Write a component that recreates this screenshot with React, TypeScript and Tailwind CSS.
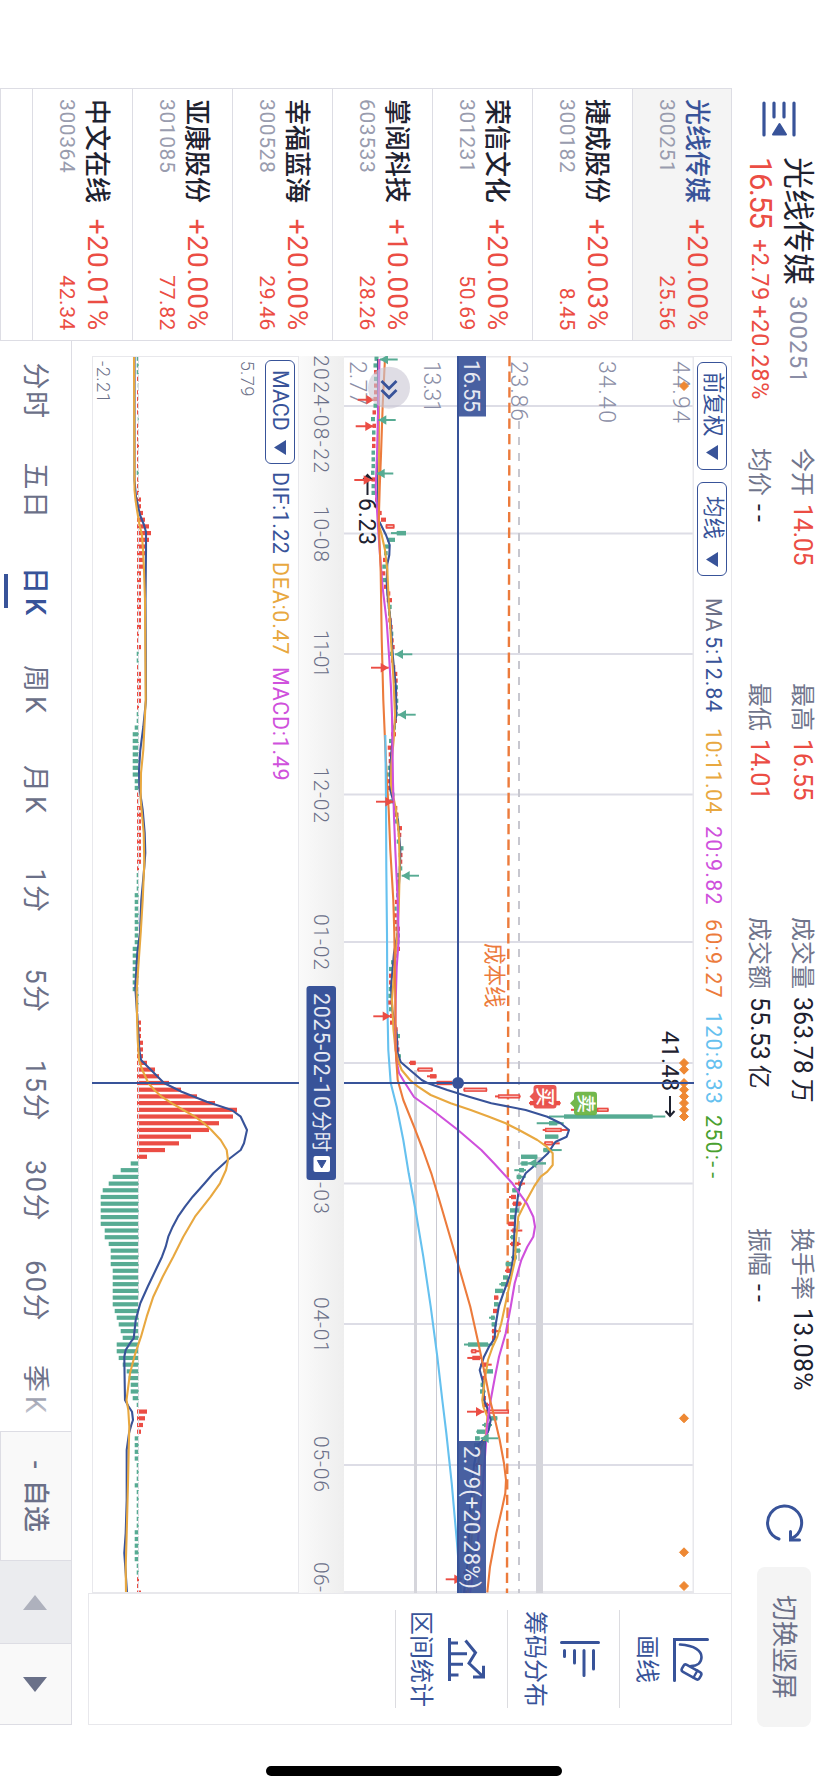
import React from 'react';

type Point = [number, number];

interface Stock {
  name: string;
  code: string;
  change: string;
  price: string;
}

const STOCKS: Stock[] = [
  { name: '光线传媒', code: '300251', change: '+20.00%', price: '25.56' },
  { name: '捷成股份', code: '300182', change: '+20.03%', price: '8.45' },
  { name: '荣信文化', code: '301231', change: '+20.00%', price: '50.69' },
  { name: '掌阅科技', code: '603533', change: '+10.00%', price: '28.26' },
  { name: '幸福蓝海', code: '300528', change: '+20.00%', price: '29.46' },
  { name: '亚康股份', code: '301085', change: '+20.00%', price: '77.82' },
  { name: '中文在线', code: '300364', change: '+20.01%', price: '42.34' },
];

const TABS = ['分时', '五日', '日K', '周K', '月K', '1分', '5分', '15分', '30分', '60分', '季K'];

const RED = '#eb4d44';
const GREEN = '#57ab93';
const BLUE = '#385399';
const YELLOW = '#e8a840';
const MAGENTA = '#cf51dc';
const ORANGE = '#ec7b3c';
const SKY = '#66c1ef';

// Levels are measured upwards from the bottom of the screen
const FLOOR = 828;
const CURSOR_X = 1083;
const STEP = 6.706;
const barX = (k: number) => CURSOR_X + k * STEP;
const levelY = (level: number) => FLOOR - level;

const toPath = (values: number[]) => {
  let d = '';
  for (let i = 0; i < values.length; i += 2) {
    d += `${i === 0 ? 'M' : 'L'}${values[i]} ${levelY(values[i + 1])}`;
  }
  return d;
};

const GRID_X = [406, 533.5, 654, 794.5, 942, 1063, 1183.5, 1324, 1465];

const MA5 = [
  359, 378, 500, 378, 521, 379, 535, 386, 545, 389.7, 555, 389.3, 564, 387.3, 582, 386.7, 595, 387.5, 622, 390.7,
  655, 392.7, 688, 396, 715, 396.3, 733, 393.3, 753, 391.3, 770, 390.3, 790, 390.3, 800, 393, 820, 398, 850, 400.3,
  867, 400, 900, 398, 933, 397.7, 953, 394, 987, 391, 1010, 392.3, 1033, 396.7, 1053, 397.7, 1062, 400.7, 1070, 410,
  1080, 421.7, 1083, 427.3, 1090, 447.3, 1096.7, 469, 1103.3, 491.3, 1110, 525.7, 1116.7, 547.3, 1123.3, 560.7,
  1130, 569, 1136.7, 566.7, 1141.7, 555.7, 1145, 553.3, 1153.3, 548, 1163.3, 537.3, 1173.3, 525.7, 1183.3, 520.7,
  1193.3, 518.3, 1216.7, 515.3, 1240, 514, 1256.7, 513.3, 1273.3, 510.7, 1293.3, 503.3, 1306.7, 498.7, 1326.7, 495.3,
  1338.3, 494.7, 1346.7, 489, 1356.7, 484, 1370, 479.7, 1383.3, 483.3, 1400, 484, 1410, 488, 1420, 490.7,
  1430, 488.7, 1438.3, 484.7, 1445, 478, 1465, 474, 1510, 470, 1560, 468, 1593, 464,
];

const MA10 = [
  359, 379, 525, 379, 535, 381.7, 550, 385, 570, 387.3, 600, 388.7, 640, 391, 680, 393.5, 715, 395, 740, 393.7,
  765, 391.3, 785, 391, 810, 396, 835, 399, 870, 399.7, 910, 398.7, 940, 397, 970, 394.3, 1000, 392, 1030, 393.5,
  1050, 395.5, 1062, 398.5, 1070, 401.7, 1080, 410, 1086.7, 418, 1095, 430.7, 1103.3, 450.7, 1110, 470.7,
  1116.7, 489, 1123.3, 505.7, 1130, 519, 1140, 537.3, 1146.7, 546.7, 1153.3, 552.7, 1165, 552.7, 1171.7, 547.3,
  1176.7, 540.7, 1186.7, 534, 1200, 526.7, 1216.7, 518.3, 1240, 516, 1260, 515, 1276.7, 511.3, 1293.3, 507.7,
  1323.3, 501.3, 1336.7, 497.3, 1346.7, 492.7, 1360, 488, 1380, 484.7, 1400, 482.3, 1406.7, 483.3, 1416.7, 487.3,
  1426.7, 486.7, 1436.7, 485.7, 1450, 480, 1500, 474, 1593, 468,
];

const MA20 = [
  359, 379.5, 455, 377, 488, 375.7, 521.7, 377.7, 555, 380, 588, 382.7, 622, 386.7, 655, 389, 688, 391, 715, 392,
  783, 393, 817, 394, 850, 395.3, 900, 397.7, 940, 398.7, 967, 396.7, 1000, 395.7, 1033, 395.3, 1060, 396.3,
  1073, 399, 1083, 405, 1097, 414, 1110, 432.3, 1130, 458, 1150, 481.3, 1163.3, 494, 1183.3, 512.3, 1203.3, 526.7,
  1216.7, 533.3, 1226.7, 535, 1236.7, 533.3, 1246.7, 527.3, 1260, 521.3, 1283.3, 514.7, 1306.7, 510.7, 1333.3, 505.7,
  1356.7, 499, 1376.7, 495, 1400, 490.7, 1410, 489, 1430, 486.7, 1443, 486, 1483, 483, 1540, 478, 1593, 470,
];

const MA60 = [
  358, 385, 405, 382.7, 455, 381, 488, 379.7, 521, 378.7, 572, 380.7, 638, 381.7, 700, 383.3, 740, 385, 777, 386.7,
  810, 388.7, 850, 390.3, 900, 393.3, 933, 394.3, 1000, 395.3, 1050, 395.7, 1060, 396.3, 1080, 397.7, 1100, 403.3,
  1126.7, 414, 1150, 423, 1173.3, 431.3, 1206.7, 441.3, 1240, 451, 1273.3, 460.7, 1306.7, 470.3, 1340, 477.7,
  1373.3, 484.7, 1400, 490, 1416.7, 494.3, 1440, 499.7, 1463.3, 504, 1480, 506, 1493.3, 505.3, 1510, 501.7,
  1533.3, 496.3, 1566.7, 490, 1592.3, 487.3,
];

const MA120 = [
  735, 385.3, 800, 386, 867, 386.3, 933, 387, 1000, 387.3, 1050, 388.3, 1083, 390.7, 1106.7, 396.7, 1140, 403.3,
  1173.3, 408.7, 1210, 415.5, 1256.7, 423.3, 1306.7, 430.7, 1356.7, 437.3, 1400, 442.3, 1433, 446.3, 1483, 451.7,
  1543, 457, 1593, 461,
];

const DIF = [
  357, 134.5, 480, 134.5, 497, 136, 506, 138, 515, 140, 525, 144, 532, 146, 550, 146, 600, 145.5, 700, 146,
  727, 143.3, 750, 140.3, 770, 139, 787, 139.3, 810, 142.7, 833, 144.7, 853, 145.3, 867, 144.3, 900, 141.3, 933, 140,
  953, 137.3, 987, 135.3, 1013, 137, 1037, 138.7, 1050, 139.3, 1060, 141, 1073, 154, 1083, 164, 1091.7, 181.7,
  1101.7, 206.7, 1110, 231.7, 1116.7, 240.7, 1130, 247, 1143.3, 244, 1150, 240.7, 1160, 227.7, 1173.3, 213.3,
  1183.3, 204.7, 1196.7, 192.7, 1206.7, 185, 1216.7, 178, 1226.7, 172.7, 1236.7, 168.3, 1246.7, 165.7, 1256.7, 162,
  1270, 155.7, 1286.7, 147.7, 1303.3, 140.3, 1320, 135.7, 1338.3, 133.7, 1341.7, 131, 1350, 125.7, 1356.7, 124.3,
  1383, 124.7, 1400, 125, 1406, 128.3, 1411.7, 132, 1420, 133, 1425, 131.3, 1433.3, 129, 1450, 126.7, 1500, 126.7,
  1533, 125.7, 1553, 124.3, 1573, 125.7, 1593, 127,
];

const DEA = [
  357, 134, 490, 134.5, 500, 135.5, 510, 137, 525, 139.5, 535, 142, 550, 143, 570, 144, 600, 145, 700, 145.7,
  750, 143.3, 773, 141, 800, 140.7, 833, 143.7, 863, 144.3, 900, 142.7, 933, 140.7, 967, 138.3, 990, 136.7, 1017, 137,
  1040, 137.7, 1060, 139, 1070, 142.3, 1083, 148.3, 1090, 154.3, 1096.7, 161.7, 1103.3, 172, 1110, 183.3, 1116.7, 195,
  1123.3, 204, 1130, 211.3, 1140, 220.7, 1150, 226.7, 1160, 228, 1170, 226, 1183.3, 220, 1196.7, 210.7, 1216.7, 195,
  1236.7, 183.3, 1256.7, 173.3, 1276.7, 162.7, 1296.7, 153.3, 1316.7, 146.7, 1336.7, 141, 1353.3, 135.3, 1373.3, 130,
  1400, 126.5, 1410, 128.3, 1426.7, 129.3, 1450, 128.7, 1483, 128, 1533, 126.7, 1567, 125.7, 1593, 126,
];

// Histogram from bar -108 to bar 76, cursor sits on bar 0
const HISTOGRAM = [
  -2, -2, -2, 2, -1, 1, 1, 1, 1, -1, 1, 2, 1, 2, 1, 2, 1, -2, 2, 2, 2,
  4, 4, 6, 8, 12, 14, 12, 10, 8, 6, 6, 4, 4, 4, 4, 4, 4, 4, 4, 4, 2, 2, 4, -2, -2, 2, 4, 4, 4, 4, 4, 2, -2, -2, -4,
  -6, -6, -6, -6, -6, -6, -6, -4, -4, 2, 2, 4, 4, 4, 4, 4, 4, 4, 4, 4, 2, -2, -2, -2, -4, -4, -4, -4, -4, -4, -4, -4,
  -6, -6, -6, -6, -6, -6, -6, -2, -2, -2, 2, 4, 4, 4, 6, 6, 6, 10, 18, 22, 32, 44, 60, 78, 100, 96, 82, 72, 54, 42,
  28, 10, -8, -18, -26, -30, -36, -38, -38, -38, -38, -38, -34, -34, -30, -28, -28, -28, -26, -26, -26, -26, -26, -26,
  -24, -22, -20, -18, -16, -22, -22, -20, -16, -12, -10, -8, -8, -6, -2, 10, 8, 6, 4, -4, -4, -4, -4, -2, -2, -2, -4,
  -2, -2, -2, -2, -2, -2, -4, -4, -4, -4, -4, -2, -2, 2, 2, 4,
];

// Early candles are tiny: direction plus body bottom / top, one per bar from -108
const SMALL: [string, number, number][] = [
  ['g', 374.5, 378.5], ['g', 373.5, 378], ['r', 374, 377.5], ['g', 374, 377.5], ['r', 374, 377], ['r', 374, 377],
  ['r', 373.5, 377], ['g', 373.5, 377], ['r', 372.5, 376], ['g', 371, 375], ['r', 372.5, 376], ['g', 372, 375.5],
  ['r', 372, 375.5], ['r', 372, 375.5], ['g', 371.5, 375], ['g', 371.5, 375], ['g', 371.5, 375], ['g', 371, 374.5],
  ['r', 371.5, 375], ['g', 371.5, 375], ['g', 371.5, 375], ['r', 375, 378.5], ['r', 375, 379], ['r', 378, 381.7],
  ['r', 381, 386], ['r', 385.7, 394.3], ['g', 396.7, 406], ['g', 387.3, 395], ['g', 385, 389], ['g', 384, 387.7],
  ['r', 383, 386.7], ['g', 382.3, 386], ['r', 381.7, 385.3], ['g', 382.3, 386], ['r', 384, 388], ['r', 386.7, 390.3],
  ['r', 386.7, 392], ['g', 387.7, 391.7], ['g', 388, 391], ['r', 388.3, 391.7], ['r', 389.3, 392.7], ['g', 390, 393.3],
  ['r', 390, 393.7], ['r', 391, 394.7], ['g', 390, 393.3], ['r', 391, 394], ['r', 392.3, 395.3], ['r', 393.3, 397.3],
  ['r', 393.3, 397.7], ['g', 394, 398], ['r', 394.5, 397.5], ['g', 395, 398.3], ['g', 395, 398], ['g', 395, 397.7],
  ['r', 394, 397], ['g', 393, 396], ['r', 391, 396], ['g', 389, 392.3], ['r', 387.7, 392], ['r', 388.7, 392],
  ['r', 388.7, 392], ['g', 387.7, 391], ['g', 386, 390], ['r', 386, 390], ['r', 386.7, 390], ['g', 392.5, 394.5],
  ['g', 390, 393], ['r', 393.3, 397.3], ['r', 393.3, 398.5], ['g', 394, 398], ['r', 397, 402], ['r', 397.7, 401.3],
  ['g', 396.7, 399.3], ['g', 399, 403.5], ['r', 398.7, 402.5], ['r', 399.3, 402.3], ['g', 398.7, 402.3], ['g', 396.7, 400],
  ['r', 396, 399.5], ['r', 396, 399.3], ['g', 396, 399], ['r', 395, 398], ['g', 394.3, 396.7], ['r', 393.3, 396.7],
  ['r', 393.3, 396.7], ['r', 395.3, 400], ['g', 396, 400], ['g', 395.5, 399.5], ['r', 395, 400], ['g', 393.3, 397.7],
  ['g', 391, 395], ['g', 389, 393.3], ['r', 389, 393.3], ['r', 389, 392], ['g', 388.7, 391.7], ['g', 388.3, 392.3],
  ['r', 387.7, 391], ['g', 389, 391.5], ['r', 390, 392], ['r', 390, 394], ['r', 393.3, 397.7], ['g', 395, 400],
  ['r', 395.5, 398.5], ['r', 396, 399.5], ['g', 396.7, 400], ['r', 396.5, 399.5],
];

// bar, colour, low, body bottom, body top, high
const CANDLES: [number, string, number, number, number, number][] = [
  [-83, 'h', 385.7, 386, 394.3, 394.3], [-82, 'g', 391, 397, 406, 406],
  [-4, 'g', 397, 397, 400.7, 401], [-3, 'r', 409, 410, 415.7, 415.7], [-2, 'h', 417, 417.7, 432.5, 433],
  [-1, 'r', 427, 430, 436.5, 436.5], [0, 'r', 436, 436.5, 452, 452], [1, 'h', 463.3, 463.8, 487, 487.3],
  [2, 'h', 495, 498, 520, 520.7], [3, 'r', 529, 530, 560, 560.7], [4, 'h', 571, 597, 608.5, 608.7],
  [5, 'g', 549, 564, 652.7, 665.3], [6, 'g', 536.7, 549, 557.3, 563.7], [7, 'h', 542.7, 545, 561.7, 569],
  [8, 'g', 545, 545, 558.3, 558.3], [9, 'h', 544, 544.5, 553, 559.7], [10, 'g', 543.3, 543.3, 550.7, 561.7],
  [11, 'g', 521, 521, 537.3, 537.3], [12, 'g', 520.3, 521.3, 527.7, 546], [13, 'g', 514.3, 519, 524, 526],
  [14, 'g', 516.7, 516.7, 521.3, 525.7], [15, 'r', 515, 518, 522.3, 525], [16, 'g', 512.3, 512.3, 518.7, 518.7],
  [17, 'r', 509, 511, 516, 516], [18, 'r', 512.3, 513, 520.7, 521.7], [19, 'g', 510, 510, 518.7, 518.7],
  [20, 'g', 510, 510, 515, 515], [21, 'r', 507.7, 508.3, 514.3, 515], [22, 'r', 510.7, 512.3, 515.7, 522.3],
  [23, 'g', 510, 511, 515, 515], [24, 'r', 510, 511, 518.7, 520.7], [25, 'g', 514, 516, 520, 520.7],
  [26, 'g', 511, 512.3, 516.7, 516.7], [27, 'g', 505.7, 505.7, 513, 513], [28, 'r', 505, 506.3, 510.7, 512.7],
  [29, 'g', 503, 503, 508, 508], [30, 'g', 499.3, 501, 506, 506], [31, 'g', 495, 495, 503.3, 503.3],
  [32, 'r', 494, 494, 498.3, 498.3], [33, 'g', 494, 494, 498.7, 498.7], [34, 'r', 493, 493, 497.3, 497.3],
  [35, 'g', 489, 491, 494.7, 495], [36, 'g', 491.7, 491.7, 496.7, 496.7], [37, 'r', 491.7, 492, 496.3, 500.7],
  [38, 'r', 492, 492, 495.7, 495.7], [39, 'g', 464, 468, 488, 494], [40, 'h', 470.7, 471.3, 476.3, 479.3],
  [41, 'r', 467.3, 472.3, 480, 481], [42, 'r', 480, 482.3, 487.3, 491.7], [43, 'g', 483, 484, 493, 493],
  [44, 'r', 482.3, 482.3, 486, 486], [45, 'g', 480.7, 480.7, 484.5, 484.5], [46, 'g', 480, 480, 485, 485.7],
  [47, 'r', 482.3, 482.3, 486, 486], [48, 'r', 482.3, 483, 488, 489], [49, 'h', 485.7, 486, 509, 509],
  [50, 'g', 490, 491, 497.3, 497.3], [51, 'g', 482.3, 484, 490.7, 492], [52, 'g', 476.3, 477, 487, 489],
  [53, 'g', 475, 475, 479.7, 479.7], [54, 'g', 474, 474, 480, 482], [55, 'r', 474, 474, 479, 481],
  [57, 'r', 473, 476, 480, 482], [59, 'g', 471, 472, 477, 478], [61, 'r', 470, 471, 476, 477],
  [64, 'g', 468, 470, 475, 476], [67, 'r', 467, 468, 473, 475], [70, 'g', 465, 467, 472, 473],
  [73, 'r', 463, 464, 469, 470], [76, 'r', 463, 463, 467, 468],
];

// x, tip level, tail level
const SELL_ARROWS: [number, number, number][] = [
  [359.5, 380, 397.7], [420, 378.3, 395.7], [473.5, 376.7, 393.3], [654.3, 395, 412.3],
  [714.7, 398, 415.7], [875.7, 401.7, 419], [1163.3, 528.3, 546], [1438.3, 480.7, 498.3],
];
const BUY_ARROWS: [number, number, number][] = [
  [399.7, 374.3, 357.7], [426.3, 373.3, 355.7], [480, 371.7, 354.3], [667.7, 388.7, 371],
  [801.7, 393.3, 376], [1016.3, 390.7, 373.3], [1411.7, 484, 467], [1579.3, 462.3, 445.7],
];

const DIAMONDS = [386, 1063, 1069.7, 1083, 1089.7, 1096.4, 1103.1, 1109.8, 1116.5, 1418.3, 1552.3, 1586];

const Candle: React.FC<{ data: [number, string, number, number, number, number] }> = ({ data }) => {
  const [k, kind, low, bottom, top, high] = data;
  const color = kind === 'g' ? GREEN : RED;
  const hollow = kind === 'h';
  const x = barX(k);
  return (
    <g>
      <rect x={x - 1} y={levelY(high)} width={2} height={high - low} fill={color} />
      <rect
        x={x - (hollow ? 1.4 : 2.2)}
        y={levelY(top) + (hollow ? 0.7 : 0)}
        width={hollow ? 2.8 : 4.4}
        height={top - bottom - (hollow ? 1.4 : 0)}
        fill={hollow ? '#f7b9b5' : color}
        stroke={hollow ? color : 'none'}
        strokeWidth={1.5}
      />
    </g>
  );
};

const TradeArrow: React.FC<{ at: [number, number, number]; color: string }> = ({ at, color }) => {
  const [x, tip, tail] = at;
  const dir = tail > tip ? 1 : -1;
  return (
    <g fill={color}>
      <path d={`M${x} ${levelY(tip)}V${levelY(tail)}`} stroke={color} strokeWidth={1.9} />
      <path d={`M${x} ${levelY(tip)}L${x - 4.8} ${levelY(tip + 8 * dir)}H${x + 4.8}Z`} />
    </g>
  );
};

const TradeFlag: React.FC<{ x: number; y: number; label: string; color: string }> = ({ x, y, label, color }) => (
  <g opacity={0.95}>
    <rect x={x} y={y} width={23.5} height={23} rx={3} fill={color} />
    <path d={`M${x + 7} ${y + 22.5}h9l-4.5 4.5z`} fill={color} />
    <text x={x + 11.7} y={y + 18.5} fontSize={19} fontWeight={500} fill="#fff" textAnchor="middle">
      {label}
    </text>
  </g>
);

const Caret = () => (
  <svg width="15" height="12" viewBox="0 0 15 12">
    <path d="M0 0h15L7.5 12z" fill={BLUE} />
  </svg>
);

const Stat: React.FC<{ label: string; value: string; unit?: string; className?: string }> = ({
  label,
  value,
  unit,
  className = 'text-[#1e2230]',
}) => (
  <div className="flex h-[43px] items-center gap-[8px] whitespace-nowrap text-[24px]">
    <span className="text-[#70758c]">{label}</span>
    <span className={`text-[25px] ${className} ${value === '--' ? 'tracking-[4px]' : ''}`}>
      {value}
      {unit && <span className="ml-[5px] text-[24px]">{unit}</span>}
    </span>
  </div>
);

const Header = () => (
  <header className="flex h-[96px] shrink-0 pl-[101px]">
    <svg className="mt-[31px]" width="36" height="36" viewBox="101 31 36 36">
      <path d="M103 34h32M103 64h32M103 44h14M103 54h14" stroke={BLUE} strokeWidth="3.2" strokeLinecap="round" />
      <path d="M124 48.500L134.500 42v13z" fill={BLUE} stroke={BLUE} strokeWidth="2" strokeLinejoin="round" />
    </svg>
    <div className="ml-5 flex w-[291px] flex-col whitespace-nowrap pt-[7px]">
      <div className="flex h-[46px] items-center">
        <span className="text-[32px] text-[#1e2230]">光线传媒</span>
        <span className="ml-[11px] text-[24px] tracking-[1.200px] text-[#8b8ea6]">300251</span>
      </div>
      <div className="flex h-[31px] items-center text-[#eb4d44]">
        <span className="w-[82px] text-[31px] tracking-[-1.500px]">16.55</span>
        <span className="w-[66px] text-[23.500px] tracking-[0.5px]">+2.79</span>
        <span className="text-[23.500px] tracking-[0.8px]">+20.28%</span>
      </div>
    </div>
    <div className="flex pt-[4px]">
      <div className="w-[235px]">
        <Stat label="今开" value="14.05" className="tracking-[-0.3px] text-[#eb4d44]" />
        <Stat label="均价" value="--" />
      </div>
      <div className="w-[234px]">
        <Stat label="最高" value="16.55" className="tracking-[-0.3px] text-[#eb4d44]" />
        <Stat label="最低" value="14.01" className="tracking-[-0.5px] text-[#eb4d44]" />
      </div>
      <div className="w-[311px]">
        <Stat label="成交量" value="363.78" unit="万" />
        <Stat label="成交额" value="55.53" unit="亿" />
      </div>
      <div className="w-[275px]">
        <Stat label="换手率" value="13.08%" className="tracking-[0.3px] text-[#1e2230]" />
        <Stat label="振幅" value="--" />
      </div>
    </div>
    <svg className="mt-[23px]" width="40" height="40" viewBox="1504 23 40 40">
      <path d="M1540 49A17 17 0 1 1 1539.500 36.500" fill="none" stroke={BLUE} strokeWidth="3" strokeLinecap="round" />
      <path d="M1532.500 37.500h8.500v-9" fill="none" stroke={BLUE} strokeWidth="3" strokeLinecap="round" />
    </svg>
    <button className="mt-[17px] ml-[24px] h-[54px] w-[160px] rounded-lg bg-[#f4f4f4] text-[26px] text-[#6b7088]">
      切换竖屏
    </button>
  </header>
);

const StockList = () => (
  <aside className="h-[732px] w-[253px] shrink-0 overflow-hidden border border-[#dddde4]">
    {STOCKS.map((stock, i) => (
      <div
        key={stock.code}
        className={`flex flex-col border-b border-[#dddde4] pr-[9px] pl-[10px] ${i === 0 ? 'h-[99px] bg-[#f4f4f4] pt-[17px]' : 'h-[100px] pt-[18px]'}`}
      >
        <div className="flex h-[34px] items-center justify-between">
          <span className={`text-[26px] font-medium ${i === 0 ? 'text-[#385399]' : 'text-[#1e2230]'}`}>{stock.name}</span>
          <span className="text-[28px] tracking-[0.8px] text-[#eb4d44]">{stock.change}</span>
        </div>
        <div className="flex h-[28px] items-center justify-between text-[21px]">
          <span className="tracking-[0.6px] text-[#999cae]">{stock.code}</span>
          <span className="tracking-[0.6px] text-[#eb4d44]">{stock.price}</span>
        </div>
      </div>
    ))}
  </aside>
);

const ChartToolbar = () => (
  <div className="flex h-[38px] items-center border-t border-l border-[#e8e8ec] pl-[5px] whitespace-nowrap text-[21.500px] tracking-[1.200px]">
    <button className="flex h-[30px] w-[108px] items-center justify-between rounded-md border border-[#385399] pr-[9px] pl-[9px] tracking-normal text-[#385399]">
      前复权
      <Caret />
    </button>
    <button className="ml-3 flex h-[30px] w-[94px] items-center justify-between rounded-md border border-[#385399] pr-[8px] pl-[13px] tracking-normal text-[#385399]">
      均线
      <Caret />
    </button>
    <span className="ml-[22px] w-[38px] tracking-[0.5px] text-[#6b7088]">MA</span>
    <span className="w-[92px] tracking-[0.8px] text-[#385399]">5:12.84</span>
    <span className="w-[98px] tracking-[0.3px] text-[#e8a840]">10:11.04</span>
    <span className="w-[93px] text-[#cf51dc]">20:9.82</span>
    <span className="w-[93px] text-[#ec7b3c]">60:9.27</span>
    <span className="w-[103px] tracking-[1.200px] text-[#66c1ef]">120:8.33</span>
    <span className="text-[#4aa12f]">
      250:<span className="tracking-[5px]">--</span>
    </span>
  </div>
);

const PriceChart = () => (
  <svg className="block shrink-0" width="1237" height="350" viewBox="356 134 1237 350">
    <g stroke="#dddde6" strokeWidth={2}>
      {GRID_X.map((x) => (
        <path key={x} d={`M${x} 134V484`} />
      ))}
    </g>
    <path d="M356 134.500H1592V484M356.500 134V484" fill="none" stroke="#e8e8ec" strokeWidth={2} />
    <rect x={1157} y={285} width={436} height={7} fill="#d5d5db" />
    <rect x={1070} y={411} width={523} height={3} fill="#d5d5db" />
    <path d="M1100 391.500H1593" stroke="#c9c9d2" strokeWidth={1} />

    <g fill="#8b8ea6" fontSize={23} fontWeight={300}>
      <text x={361} y={155.500} textLength={62}>44.94</text>
      <text x={361} y={229.500} textLength={62}>34.40</text>
      <text x={361} y={317} textLength={60}>23.86</text>
      <text x={361} y={404.500} textLength={52}>13.31</text>
      <text x={361} y={478} textLength={44}>2.77</text>
    </g>
    <path d="M421 309H1593" stroke="#c7c7cf" strokeWidth={2} strokeDasharray="8 8" />
    <path d="M356 318.500L1593 321" stroke={ORANGE} strokeWidth={2.4} strokeDasharray="10.300 5.300" />
    <text x={943} y={341.500} fontSize={21.5} fill={ORANGE}>成本线</text>

    {SMALL.map(([kind, bottom, top], i) => (
      <rect
        key={i}
        x={barX(i - 108) - 2.1}
        y={levelY(top)}
        width={4.2}
        height={top - bottom}
        fill={kind === 'g' ? GREEN : RED}
      />
    ))}
    {CANDLES.map((candle) => (
      <Candle key={candle[0]} data={candle} />
    ))}

    <g fill="none" strokeWidth={2.1} strokeLinejoin="round">
      <path d={toPath(MA5)} stroke={BLUE} />
      <path d={toPath(MA10)} stroke={YELLOW} />
      <path d={toPath(MA20)} stroke={MAGENTA} />
      <path d={toPath(MA60)} stroke={ORANGE} />
      <path d={toPath(MA120)} stroke={SKY} />
    </g>

    {/* Lowest and highest price marks */}
    <g fill="#1e2230" fontSize={23}>
      <text x={498} y={469} textLength={47}>6.23</text>
      <text x={1031} y={166} textLength={60}>41.48</text>
    </g>
    <g fill="none" stroke="#1e2230" strokeWidth={2}>
      <path d="M495 460.500H476M480 456l-5 4.500l5 4.500" />
      <path d="M1096 158H1115M1111 153.500l5 4.500l-5 4.500" />
    </g>

    {SELL_ARROWS.map((arrow) => (
      <TradeArrow key={arrow[0]} at={arrow} color={GREEN} />
    ))}
    {BUY_ARROWS.map((arrow) => (
      <TradeArrow key={arrow[0]} at={arrow} color={RED} />
    ))}

    {DIAMONDS.map((x) => (
      <path key={x} d={`M${x} 139.500l4.500 4.500l-4.500 4.500l-4.500 -4.500z`} fill="#ee8833" stroke="#ee8833" strokeLinejoin="round" />
    ))}
    <TradeFlag x={1085} y={271.5} label="买" color="#e9504a" />
    <TradeFlag x={1091.7} y={231} label="卖" color="#6cb544" />

    <circle cx={387.7} cy={439} r={21} fill="#c9c7d4" fillOpacity={0.6} />
    <path d="M381 431.500l7.500 7.500l-7.500 7.500M390 431.500l7.500 7.500l-7.500 7.500" fill="none" stroke={BLUE} strokeWidth={2.8} />

    <path d="M356 370H1593" stroke={BLUE} strokeWidth={2} />
    <rect x={356} y={342} width={60.5} height={27} fill={BLUE} fillOpacity={0.92} />
    <text x={360} y={364.500} fontSize={22} fill="#e6e9f2" textLength={52}>16.55</text>
    <rect x={1441} y={342} width={152} height={27} fill={BLUE} fillOpacity={0.92} />
    <text x={1446} y={364.500} fontSize={22} fill="#e6e9f2" textLength={143}>2.79(+20.28%)</text>
    <circle cx={CURSOR_X} cy={370} r={6} fill={BLUE} />
  </svg>
);

const DATES: Point[] = [[506, 1008], [630, 1101], [767, 1202], [914, 102], [1297, 401], [1436, 506]];

const DateAxis = () => (
  <svg className="relative z-10 block shrink-0" width="1237" height="45" viewBox="356 484 1237 45">
    <defs>
      <linearGradient id="axis" x1="0" y1="0" x2="0" y2="1">
        <stop offset="0" stopColor="#eeeeee" />
        <stop offset="1" stopColor="#fafafa" />
      </linearGradient>
    </defs>
    <rect x={356} y={484} width={1237} height={45} fill="url(#axis)" />
    <g fill="#6b7088" fontSize={21} fontWeight={300}>
      <text x={355} y={514} textLength={118}>2024-08-22</text>
      {DATES.map(([x, date]) => {
        const digits = String(date).padStart(4, '0');
        return (
          <text key={x} x={x} y={514} textLength={digits.startsWith('11') ? 48 : 56}>{`${digits.slice(0, 2)}-${digits.slice(2)}`}</text>
        );
      })}
      <text x={1156} y={514} textLength={58}>03-03</text>
      <text x={1562} y={514} textLength={30}>06-</text>
    </g>
    <rect x={986} y={492} width={194} height={29.500} rx={3} fill={BLUE} />
    <text x={993} y={514.500} fontSize={21.5} fill="#e6e9f2" textLength={115}>2025-02-10</text>
    <text x={1111} y={514.500} fontSize={20.5} fill="#e6e9f2">分时</text>
    <rect x={1156} y={498} width={16} height={16.500} rx={2} fill="#fff" />
    <path d="M1160.500 502l7.500 4.300l-7.500 4.300z" fill={BLUE} stroke={BLUE} strokeLinejoin="round" />
  </svg>
);

const MacdChart = () => (
  <div className="h-[207px] border border-[#e8e8ec]">
    <div className="flex h-[33px] items-center pt-[3px] pl-[3px] whitespace-nowrap text-[21.500px] tracking-[0.7px]">
      <button className="flex h-[30px] w-[104px] items-center justify-between rounded-md border border-[#385399] pr-[8px] pl-[9px] tracking-normal text-[#385399]">
        MACD
        <Caret />
      </button>
      <span className="ml-[8px] w-[90px] tracking-[0.4px] text-[#385399]">DIF:1.22</span>
      <span className="w-[105px] text-[#e8a840]">DEA:0.47</span>
      <span className="text-[#cf51dc]">MACD:1.49</span>
    </div>
    <svg className="block" width="1235" height="172" viewBox="357 563 1235 172">
      {HISTOGRAM.map((value, i) => (
        <rect
          key={i}
          x={barX(i - 108) - 2.1}
          y={value > 0 ? 691 - value : 689.3}
          width={4.2}
          height={Math.abs(value)}
          fill={value > 0 ? RED : GREEN}
        />
      ))}
      <path d="M357 689.500H1592" stroke="#dcdce2" strokeWidth={1} strokeDasharray="7 2" />
      <g fill="none" strokeWidth={2.1} strokeLinejoin="round">
        <path d={toPath(DIF)} stroke={BLUE} />
        <path d={toPath(DEA)} stroke={YELLOW} />
      </g>
      <g fill="#6b7088" fontSize={18.500} fontWeight={300}>
        <text x={360.500} y={587.500} textLength={36}>5.79</text>
        <text x={361} y={731.500} textLength={42}>-2.21</text>
      </g>
    </svg>
  </div>
);

const SidePanel = () => (
  <div className="flex h-[644px] w-[132px] shrink-0 flex-col items-center border border-[#e8e8ec] text-[24px] text-[#385399]">
    <div className="flex h-[112px] w-[98px] flex-col items-center border-b border-[#dcdce0] pt-[21px] leading-none">
      <svg width="46" height="38" viewBox="1637 118 46 38" fill="none" stroke={BLUE} strokeWidth="3" strokeLinecap="round">
        <path d="M1640.500 120.500V153.500H1681.500" />
        <path d="M1645.500 148C1646.500 133 1652 126.500 1658 126.500S1667 131 1667 137" strokeWidth="2.6" />
        <rect x="1663" y="132.500" width="20" height="8" rx="2.500" transform="rotate(-61 1673 136.500)" strokeWidth="2.6" />
        <path d="M1671.500 130.500l7 4" strokeWidth="2.400" />
      </svg>
      <span className="mt-[13px]">画线</span>
    </div>
    <div className="flex h-[112px] w-[98px] flex-col items-center border-b border-[#dcdce0] pt-[18px] leading-none">
      <svg width="38" height="42" viewBox="1642 227 38 42" fill="none" stroke={BLUE} strokeWidth="3" strokeLinecap="round">
        <path d="M1644.500 229.500V266.500M1652.500 234.500H1671M1652.500 244H1677.500M1652.500 253.500H1665M1652.500 263.500H1658.500" />
      </svg>
      <span className="mt-[12px]">筹码分布</span>
    </div>
    <div className="flex h-[112px] w-[98px] flex-col items-center border-b border-[#dcdce0] pt-[20px] leading-none">
      <svg width="46" height="40" viewBox="1636 340 46 40" fill="none" stroke={BLUE} strokeWidth="3">
        <path d="M1638 377.500H1681M1643 377V369M1653.700 377V360M1664.300 377V364M1675 377V368.500" />
        <path d="M1640.500 361.500L1652.700 351.500L1663.300 358L1676.500 344M1665.700 343.500H1677V354" />
      </svg>
      <span className="mt-[14px]">区间统计</span>
    </div>
  </div>
);

const PeriodTabs = () => (
  <nav className="flex h-[72px] shrink-0 border-t border-[#dddde4]">
    <div className="relative flex w-[1091px] overflow-hidden">
      {TABS.map((tab) => (
        <div
          key={tab}
          className={`relative flex w-[100px] shrink-0 items-center justify-center pt-[2px] text-[27px] ${
            tab.endsWith('K') ? 'tracking-[4px]' : 'tracking-[1.500px]'
          } ${tab === '日K' ? 'pl-[4px] font-medium text-[#385399]' : 'text-[#6b7088]'}`}
        >
          {tab}
          {tab === '日K' && <span className="absolute bottom-1 left-[33px] h-1 w-[34px] bg-[#385399]" />}
        </div>
      ))}
      <div className="absolute inset-y-0 right-0 w-[52px] bg-linear-to-r from-white/0 to-white/90" />
    </div>
    <div className="flex w-[130px] items-center justify-center gap-[11px] border-x border-b border-[#dddde4] bg-[#f9f9f9] text-[26px] font-medium text-[#6b7088]">
      <span>-</span>
      <span>自选</span>
    </div>
    <div className="flex w-[82px] items-center justify-center bg-[#ebecef]">
      <svg width="15" height="24" viewBox="0 0 15 24">
        <path d="M15 0v24L0 12z" fill="#aeb1bd" />
      </svg>
    </div>
    <div className="flex w-[82px] items-center justify-center border-x border-[#dddde4] bg-[#f9f9f9]">
      <svg width="15" height="24" viewBox="0 0 15 24">
        <path d="M0 0v24L15 12z" fill="#6a7189" />
      </svg>
    </div>
  </nav>
);

const App = () => {
  return (
    <div className="h-[1792px] w-[828px] overflow-hidden bg-white font-[Roboto,'Noto_Sans_CJK_SC',sans-serif]">
      {/* Landscape screen turned a quarter clockwise */}
      <div className="relative flex h-[828px] w-[1792px] origin-top-left translate-x-[828px] rotate-90 flex-col">
        <Header />
        <div className="flex flex-1 pl-[88px]">
          <StockList />
          <div className="flex w-[1384px] flex-col justify-between">
            <div className="flex pl-[15px]">
              <div className="relative flex w-[1237px] flex-col">
                <ChartToolbar />
                <PriceChart />
                <DateAxis />
                <MacdChart />
                <div className="absolute top-[38px] bottom-[4px] left-[726px] w-[2px] bg-[#385399]" />
              </div>
              <SidePanel />
            </div>
            <PeriodTabs />
          </div>
        </div>
        <div className="absolute top-[266px] right-[16px] h-[296px] w-[10px] rounded-full bg-black" />
      </div>
    </div>
  );
};

export default App;
